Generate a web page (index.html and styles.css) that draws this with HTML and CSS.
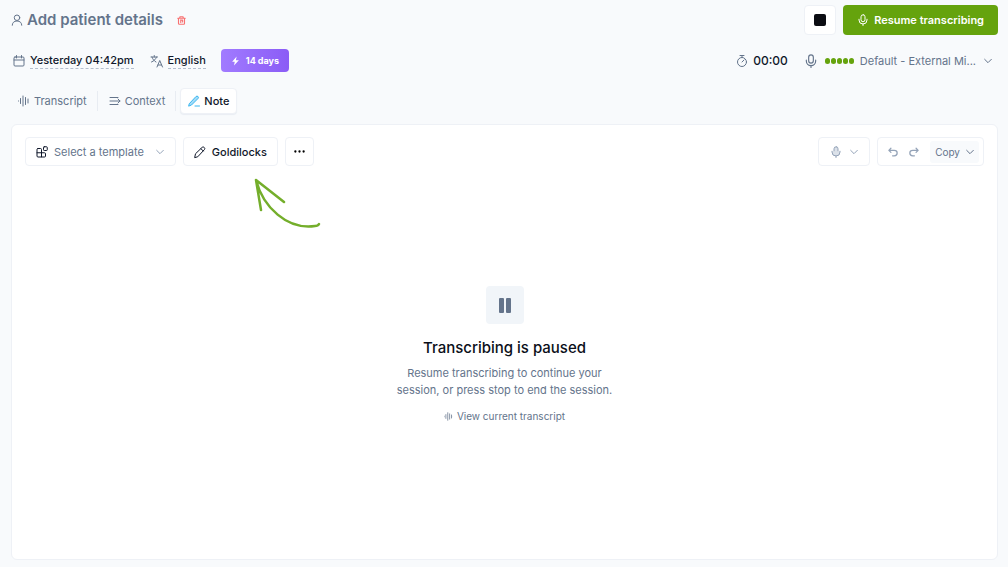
FILE: index.html
```
<!DOCTYPE html>
<html lang="en">

<head>
    <meta charset="UTF-8">
    <meta name="viewport" content="width=device-width, initial-scale=1.0">
    <title>Patient session</title>
    <link rel="stylesheet" href="styles.css">
</head>

<body>
    <!-- shared icons -->
    <svg class="sprite" aria-hidden="true">
        <symbol id="mic" viewBox="0 0 24 24">
            <rect x="8" y="1.5" width="8" height="14" rx="4" />
            <path d="M4 10.5v1.5a8 8 0 0 0 16 0v-1.5M12 20v3" />
        </symbol>
        <symbol id="chevron" viewBox="0 0 24 24">
            <path d="M2 7l10 10L22 7" />
        </symbol>
        <symbol id="wave" viewBox="0 0 24 24">
            <path d="M0 11v2M5 7v10M10 2v20M15 5v14M20 8v8M25 11v2" />
        </symbol>
    </svg>

    <header class="top-row">
        <div class="patient">
            <svg class="icon icon-user" viewBox="0 0 24 24"><circle cx="12" cy="7.5" r="5.5" /><path d="M2.5 22.5c0-5 3.5-8.5 9.5-8.5s9.5 3.5 9.5 8.5" /></svg>
            <h1>Add patient details</h1>
            <button class="delete" aria-label="Delete session">
                <svg class="icon" viewBox="0 0 24 24"><path d="M2 6h20M7 6l1-4h8l1 4M4 6v14q0 2 2 2h12q2 0 2-2V6M10 10v7M10 11h5v5" /></svg>
            </button>
        </div>
        <div class="actions">
            <button class="stop" aria-label="Stop"><span class="stop-square"></span></button>
            <button class="resume"><svg class="icon"><use href="#mic" /></svg>Resume transcribing</button>
        </div>
    </header>

    <div class="info-row">
        <div class="info-left">
            <button class="info date">
                <svg class="icon icon-info" viewBox="0 0 24 24"><rect x="2" y="4" width="20" height="18" rx="2" /><path d="M2 10h20M7 1v5M17 1v5" /></svg>
                <span class="dashed">Yesterday 04:42pm</span>
            </button>
            <button class="info language">
                <svg class="icon icon-info" viewBox="0 0 24 24"><path d="M0 4h13M6.5 1v3M2 4c1 4 4 8 8 10M11 4c-1 4-5 8-10 10M12 24l5.5-13L23 24M14 20h7" /></svg>
                <span class="dashed">English</span>
            </button>
            <button class="trial">
                <svg class="bolt" viewBox="0 0 24 24"><path d="M15 0L3 14h7l-2 10 13-14h-8z" /></svg>
                14 days
            </button>
        </div>
        <div class="info-right">
            <div class="timer">
                <svg class="icon icon-info" viewBox="0 0 24 24"><circle cx="12" cy="14" r="9" /><path d="M8 1h8M12 1v4M12 14l4-4" /></svg>
                00:00
            </div>
            <button class="device">
                <svg class="icon icon-device"><use href="#mic" /></svg>
                <span class="level"><i></i><i></i><i></i><i></i><i></i></span>
                <span class="device-name">Default - External Mi...</span>
                <svg class="icon icon-chevron"><use href="#chevron" /></svg>
            </button>
        </div>
    </div>

    <nav class="tabs">
        <button class="tab"><svg class="icon"><use href="#wave" /></svg>Transcript</button>
        <span class="divider"></span>
        <button class="tab"><svg class="icon" viewBox="0 0 24 24"><path d="M2 5h16M2 12h20M2 19h16M18 8l4 4-4 4" /></svg>Context</button>
        <span class="divider"></span>
        <button class="tab active"><svg class="icon icon-note" viewBox="0 0 24 24"><path class="note-fill" d="M3 17L16 3q2-1.5 4 0t0 4L7 20l-5 2z" /><path d="M14 22h9" /></svg>Note</button>
    </nav>

    <main class="panel">
        <div class="toolbar">
            <div class="tools">
                <button class="tool template">
                    <svg class="icon icon-template" viewBox="0 0 24 24"><path d="M4 5h5q2 0 2 2v15H4q-2 0-2-2V7q0-2 2-2zM2 13.5h15q2 0 2 2V20q0 2-2 2h-6" /><rect x="15" y="1.5" width="7.5" height="7.5" rx="1.5" /></svg>
                    Select a template
                    <svg class="icon icon-chevron pale"><use href="#chevron" /></svg>
                </button>
                <button class="tool dark">
                    <svg class="icon" viewBox="0 0 24 24"><path d="M1.5 22.5l1.5-7L16.5 2.5q2-1.5 4 .5t.5 4L8 21zM14 5.5l4.5 4.5" /></svg>
                    Goldilocks
                </button>
                <button class="tool more" aria-label="More options">
                    <svg class="dots" viewBox="0 0 24 24"><circle cx="3" cy="12" r="2.5" /><circle cx="12" cy="12" r="2.5" /><circle cx="21" cy="12" r="2.5" /></svg>
                </button>
                <svg class="arrow" viewBox="0 0 70 54" aria-hidden="true"><path d="M10 34L5 4l28 22M5 4c7 27 31 50 59 46q3 0 4-2" /></svg>
            </div>
            <div class="tools">
                <button class="tool dictate" aria-label="Dictate">
                    <svg class="icon icon-dictate"><use href="#mic" /></svg>
                    <svg class="icon icon-chevron no-fill"><use href="#chevron" /></svg>
                </button>
                <div class="tool-group">
                    <button class="history" aria-label="Undo"><svg class="icon" viewBox="0 0 24 24"><path d="M7 3L2 8l5 5M2 8h13q7 0 7 6.5T15 21h-4" /></svg></button>
                    <button class="history" aria-label="Redo"><svg class="icon" viewBox="0 0 24 24"><path d="M17 3l5 5-5 5M22 8H9q-7 0-7 6.5T9 21h4" /></svg></button>
                    <button class="copy">Copy<svg class="icon icon-chevron"><use href="#chevron" /></svg></button>
                </div>
            </div>
        </div>

        <section class="paused">
            <div class="pause-box"><span></span><span></span></div>
            <h2>Transcribing is paused</h2>
            <p>Resume transcribing to continue your<br>session, or press stop to end the session.</p>
            <a href="#transcript"><svg class="icon"><use href="#wave" /></svg>View current transcript</a>
        </section>
    </main>
</body>

</html>
```
FILE: styles.css
```
* {
    box-sizing: border-box;
}

body {
    margin: 0;
    min-height: 100vh;
    padding: 5px 10px 7px 11px;
    display: flex;
    flex-direction: column;
    background-color: #f8fafc;
    color: #0f172a;
    font-family: Inter, "Liberation Sans", sans-serif;
    font-size: 11px;
}

button {
    display: flex;
    align-items: center;
    padding: 0;
    border: none;
    background: none;
    color: inherit;
    font: inherit;
    white-space: nowrap;
    cursor: pointer;
}

h1,
h2,
p {
    margin: 0;
}

.sprite {
    display: none;
}

.icon {
    width: 12px;
    height: 12px;
    flex: none;
    fill: none;
    stroke: currentColor;
    stroke-width: 2;
    stroke-linecap: round;
    stroke-linejoin: round;
    overflow: visible;
}

.icon-chevron {
    width: 8px;
    height: 8px;
    stroke-width: 3;
}

/* header */
.top-row,
.info-row,
.toolbar {
    display: flex;
    justify-content: space-between;
}

.patient,
.actions,
.info-left,
.info-right,
.tools {
    display: flex;
    align-items: center;
}

.patient {
    color: #64748b;
}

.icon-user {
    margin-right: 4px;
}

h1 {
    font-size: 15px;
    line-height: 20px;
    font-weight: 600;
}

.delete {
    margin-left: 14px;
    color: #f87171;
}

.delete .icon {
    width: 9px;
    height: 9px;
    stroke-width: 3;
}

.actions {
    gap: 7px;
}

.stop {
    justify-content: center;
    width: 32px;
    height: 30px;
    border: 1px solid #eef1f6;
    border-radius: 4px;
    background-color: #fff;
}

.stop-square {
    width: 12px;
    height: 12px;
    border-radius: 2px;
    background-color: #0b0c12;
}

.resume {
    gap: 5px;
    height: 30px;
    padding: 0 14px;
    border-radius: 4px;
    background-color: #65a30d;
    color: #fff;
    font-weight: 600;
}

/* session info */
.info-row {
    margin-top: 14px;
    height: 23px;
    font-weight: 500;
}

.info {
    gap: 5px;
}

.icon-info {
    color: #64748b;
}

.date {
    padding-left: 2px;
}

.language {
    margin-left: 17px;
}

.dashed {
    line-height: 15px;
    border-bottom: 1px dashed #b4bfce;
}

.trial {
    gap: 6px;
    height: 23px;
    margin-left: 15px;
    padding: 0 10px;
    border-radius: 4px;
    background: linear-gradient(90deg, #a17bff, #8b5cf6);
    color: #fff;
    font-size: 9px;
    font-weight: 700;
}

.bolt {
    width: 9px;
    height: 10px;
    fill: #fff;
}

.timer {
    display: flex;
    align-items: center;
    gap: 5px;
    font-size: 12px;
}

.device {
    margin-left: 16px;
    margin-right: 6px;
    color: #64748b;
    font-weight: 400;
}

.icon-device {
    width: 14px;
    height: 14px;
}

.level {
    display: flex;
    gap: 1px;
    margin: 0 6px 0 7px;
}

.level i {
    width: 5px;
    height: 6px;
    border-radius: 3px;
    background-color: #65a30d;
}

.device-name {
    margin-right: 8px;
}

/* tabs */
.tabs {
    display: flex;
    align-items: center;
    gap: 3px;
    margin-top: 16px;
}

.tab {
    gap: 4px;
    height: 26px;
    padding: 0 6px;
    border: 1px solid transparent;
    border-radius: 4px;
    color: #64748b;
}

.tab.active {
    padding: 0 7px;
    border-color: #eef1f6;
    background-color: #fff;
    box-shadow: 0 1px 1px #e9edf3;
    color: #0f172a;
    font-weight: 500;
}

.icon-note {
    color: #38b6f0;
}

.note-fill {
    fill: #a5dcf8;
}

.divider {
    width: 1px;
    height: 20px;
    margin-right: 1px;
    background-color: #e8ecf2;
}

/* note panel */
.panel {
    flex: 1;
    display: flex;
    flex-direction: column;
    margin-top: 10px;
    padding: 12px 13px;
    border: 1px solid #eef1f6;
    border-radius: 6px;
    background-color: #fff;
}

.tools {
    position: relative;
    gap: 7px;
}

.tool,
.tool-group {
    height: 29px;
    border: 1px solid #eef1f6;
    border-radius: 4px;
}

.tool {
    gap: 6px;
    padding: 0 10px;
}

.dark {
    font-weight: 500;
}

.template {
    color: #64748b;
}

.icon-template {
    color: #0f172a;
}

.pale {
    margin: 0 1px 0 6px;
    color: #94a3b8;
}

.more {
    padding: 0 8px;
}

.dots {
    width: 11px;
    height: 11px;
}

/* hand-drawn pointer below the Goldilocks button */
.arrow {
    position: absolute;
    top: 39px;
    left: 226px;
    width: 70px;
    height: 54px;
    fill: none;
    stroke: #74ae2b;
    stroke-width: 2.5;
    stroke-linecap: round;
    stroke-linejoin: round;
}

.dictate {
    gap: 8px;
    padding: 0 11px;
    color: #94a3b8;
}

.icon-dictate {
    fill: #dbe1e9;
}

.tool-group {
    display: flex;
    align-items: center;
    padding: 0 4px 0 10px;
}

.history {
    margin-right: 11px;
    color: #94a3b8;
}

.history .icon {
    width: 10px;
    height: 10px;
    stroke-width: 3;
}

.copy {
    gap: 6px;
    height: 22px;
    padding: 0 5px;
    border-radius: 3px;
    background-color: #f8fafc;
    color: #64748b;
    font-size: 10px;
}

/* paused state */
.paused {
    flex: 1;
    display: flex;
    flex-direction: column;
    align-items: center;
    justify-content: center;
    padding-bottom: 4px;
    color: #64748b;
}

.pause-box {
    display: flex;
    align-items: center;
    justify-content: center;
    gap: 2px;
    width: 38px;
    height: 38px;
    border-radius: 4px;
    background-color: #f1f5f9;
}

.pause-box span {
    width: 5px;
    height: 15px;
    border-radius: 1px;
    background-color: #64748b;
}

h2 {
    margin-top: 14px;
    color: #0b0f19;
    font-size: 15px;
    line-height: 20px;
    font-weight: 500;
}

.paused p {
    margin-top: 7px;
    line-height: 17px;
    text-align: center;
}

.paused a {
    display: flex;
    align-items: center;
    gap: 4px;
    margin-top: 10px;
    color: #64748b;
    font-size: 10px;
    line-height: 14px;
    text-decoration: none;
}

.paused a .icon {
    width: 9px;
    height: 9px;
}
```
